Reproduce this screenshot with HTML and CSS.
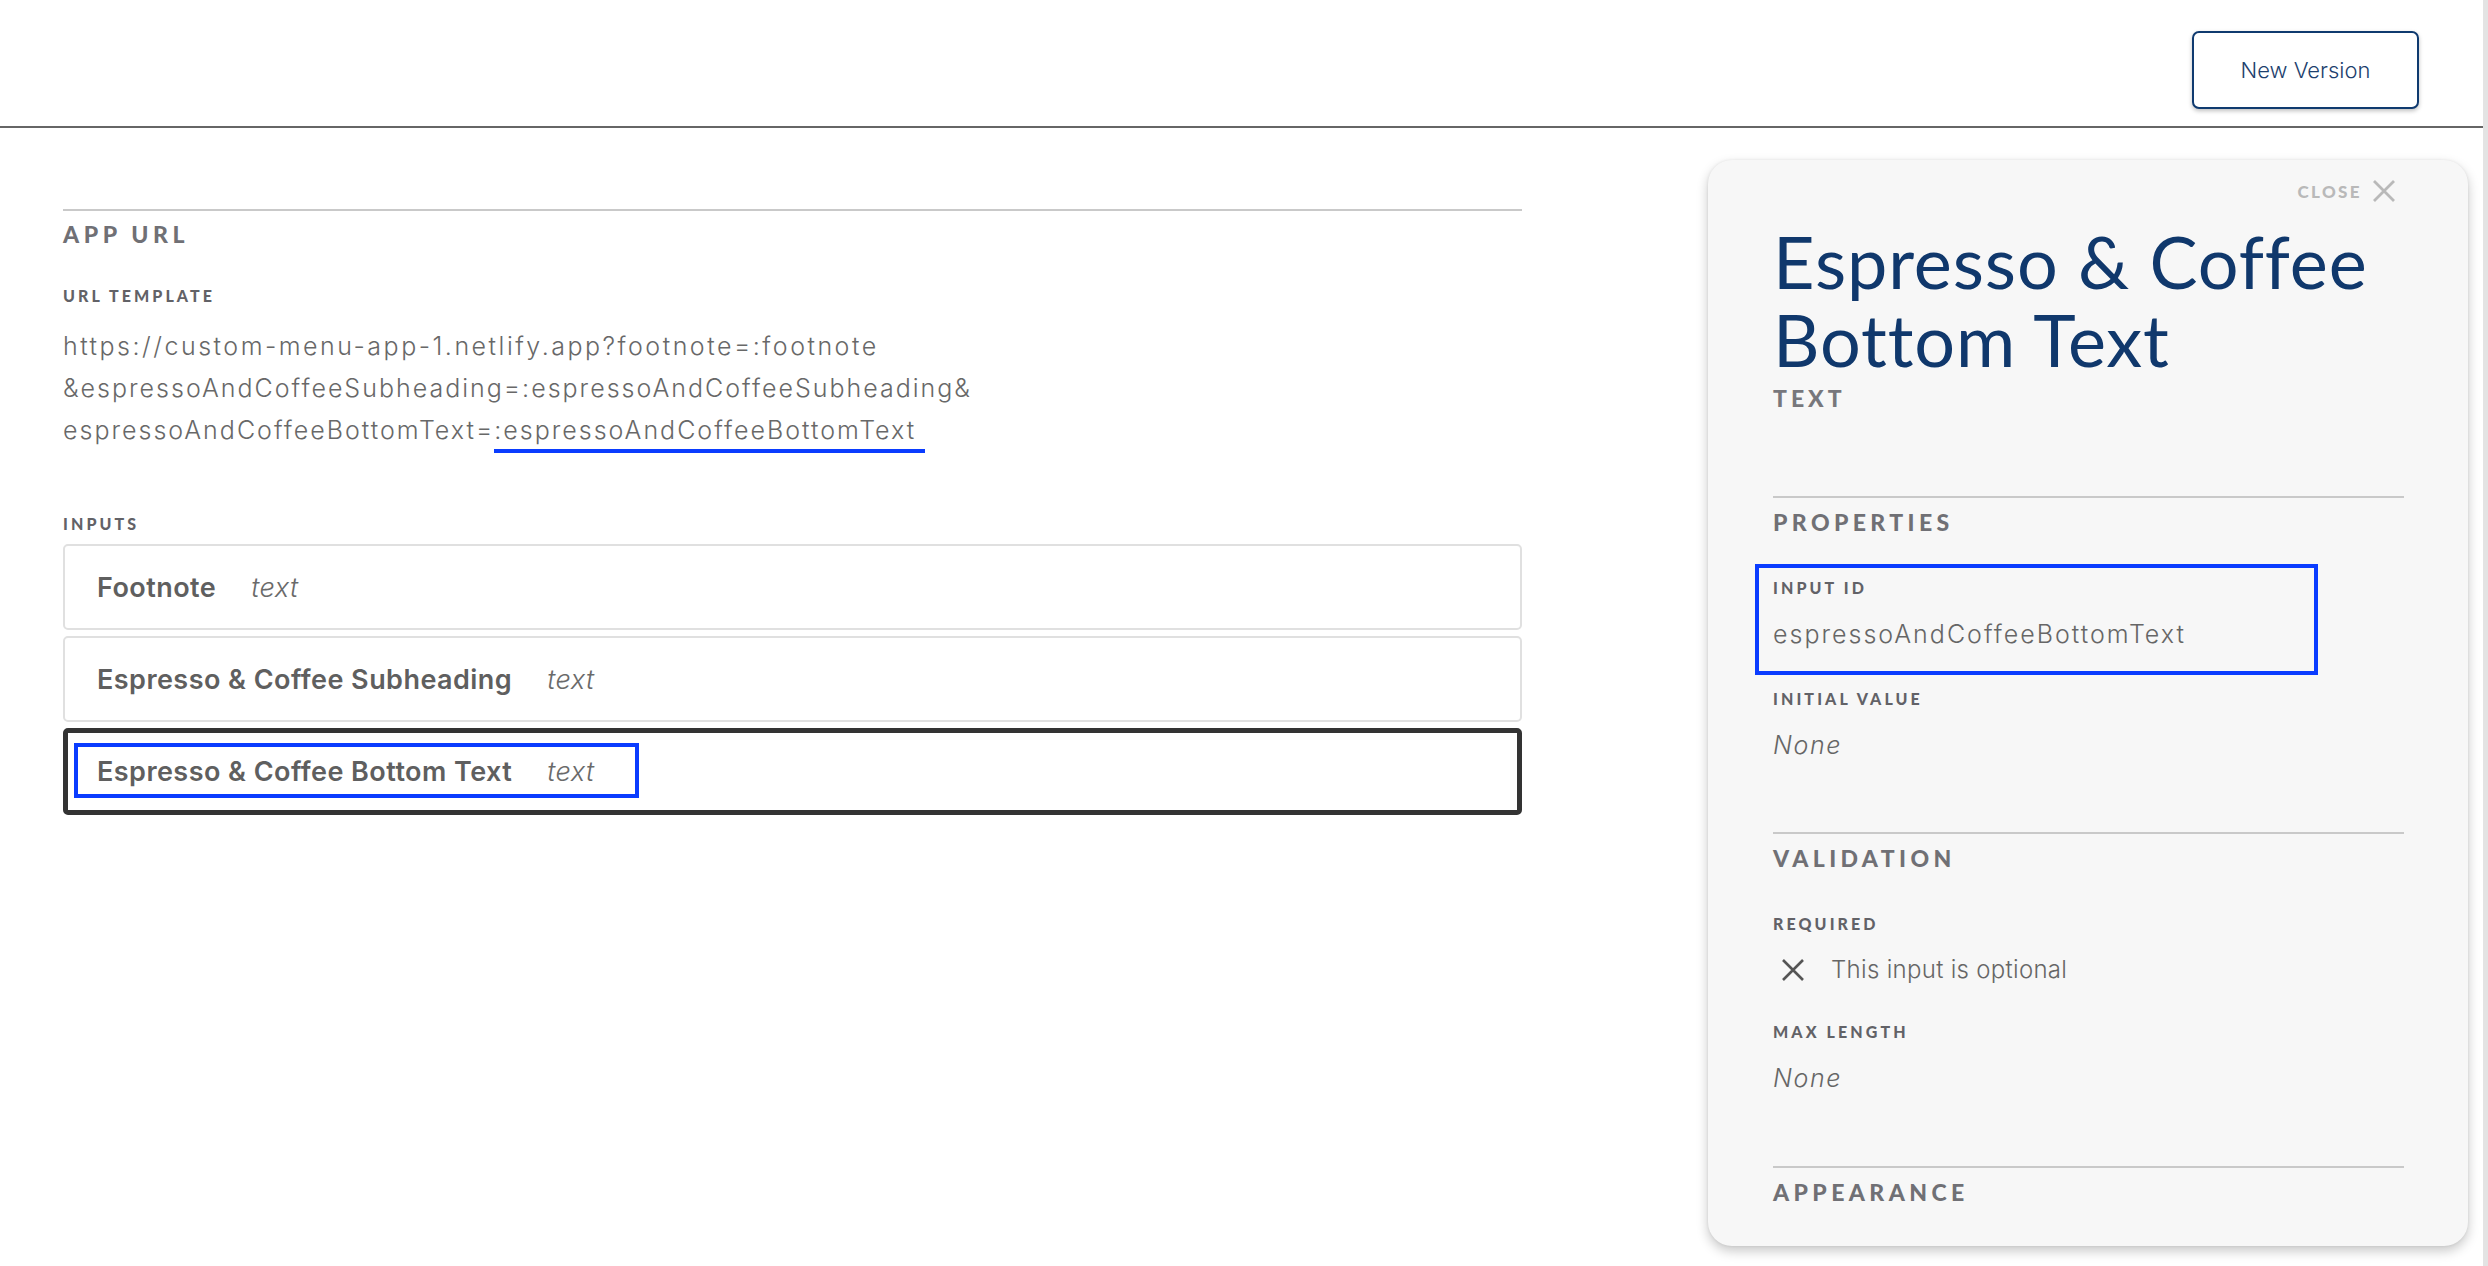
FILE: index.html
```html
<!DOCTYPE html>
<html lang="en">
<head>
<meta charset="utf-8">
<title>App inputs</title>
<link rel="stylesheet" href="styles.css">
</head>
<body>
<div class="page">
  <div class="main">
    <header class="topbar">
      <button class="btn-outline">New Version</button>
    </header>
    <div class="content">
      <section class="left">
        <div class="section">
          <h2 class="section-title">APP URL</h2>
          <div class="label">URL TEMPLATE</div>
          <div class="url">
            <span class="url-line url-line-first">https://custom-menu-app-1.netlify.app?footnote=:footnote</span>
            <span class="url-line">&amp;espressoAndCoffeeSubheading=:espressoAndCoffeeSubheading&amp;</span>
            <span class="url-line">espressoAndCoffeeBottomText=<span class="mark-under">:espressoAndCoffeeBottomText</span></span>
          </div>
          <div class="label label-inputs">INPUTS</div>
          <div class="cards">
            <div class="card"><span class="card-name">Footnote</span><span class="card-type">text</span></div>
            <div class="card"><span class="card-name">Espresso &amp; Coffee Subheading</span><span class="card-type">text</span></div>
            <div class="card card-active"><span class="card-name">Espresso &amp; Coffee Bottom Text</span><span class="card-type">text</span><span class="mark-box mark-card"></span></div>
          </div>
        </div>
      </section>
      <aside class="panel">
        <div class="close-row">
          <span class="close-text">CLOSE</span>
          <svg class="close-x" viewBox="0 0 24 22" width="24" height="22"><path d="M2 1 L22 21 M22 1 L2 21" stroke="currentColor" stroke-width="2.8" fill="none"/></svg>
        </div>
        <h1 class="panel-title">Espresso &amp; Coffee Bottom Text</h1>
        <div class="panel-type">TEXT</div>

        <div class="panel-section">
          <h3 class="panel-heading">PROPERTIES</h3>
          <div class="field field-marked">
            <div class="label">INPUT ID</div>
            <div class="value">espressoAndCoffeeBottomText</div>
            <span class="mark-box mark-field"></span>
          </div>
          <div class="field">
            <div class="label">INITIAL VALUE</div>
            <div class="value value-none">None</div>
          </div>
        </div>

        <div class="panel-section">
          <h3 class="panel-heading">VALIDATION</h3>
          <div class="field field-required">
            <div class="label">REQUIRED</div>
            <div class="value value-check">
              <svg class="x-icon" viewBox="0 0 24 22" width="24" height="22"><path d="M2 1 L22 21 M22 1 L2 21" stroke="currentColor" stroke-width="2.6" fill="none"/></svg>
              <span class="check-text">This input is optional</span>
            </div>
          </div>
          <div class="field">
            <div class="label">MAX LENGTH</div>
            <div class="value value-none">None</div>
          </div>
        </div>

        <div class="panel-section panel-section-last">
          <h3 class="panel-heading">APPEARANCE</h3>
        </div>
      </aside>
    </div>
  </div>
  <div class="scroll-strip"></div>
</div>
</body>
</html>
```

FILE: styles.css
```css
* { box-sizing: border-box; }

html, body {
  margin: 0;
  padding: 0;
  height: 100%;
  background: #ffffff;
  overflow: hidden;
}

body {
  font-family: "Inter", "Lato", "Liberation Sans", sans-serif;
  color: #6a6a6a;
}

.page {
  display: flex;
  height: 1266px;
}

.main {
  flex: 1;
  min-width: 0;
}

.scroll-strip {
  width: 5px;
  background: #e3e3e3;
}

/* header */
.topbar {
  height: 128px;
  border-bottom: 2px solid #666666;
  display: flex;
  justify-content: flex-end;
  align-items: flex-start;
  padding: 31px 64px 0 0;
}

.btn-outline {
  width: 227px;
  height: 78px;
  border: 2px solid #0f3a6f;
  border-radius: 7px;
  background: #ffffff;
  color: #1d3f6e;
  font-family: "Inter", "Lato", sans-serif;
  font-weight: 300;
  font-size: 22px;
  box-shadow: 0 2px 4px rgba(0, 0, 0, 0.25);
  padding: 0;
}

/* content */
.content {
  display: flex;
  align-items: flex-start;
}

.left {
  width: 1522px;
  padding: 81px 0 0 63px;
}

.section {
  border-top: 2px solid #c9c9c9;
}

.section-title {
  margin: 0;
  padding-top: 9px;
  font-family: "Lato", "Liberation Sans", sans-serif;
  font-weight: 900;
  font-size: 23px;
  line-height: 28px;
  letter-spacing: 4.6px;
  color: #707075;
}

.label {
  font-family: "Lato", "Liberation Sans", sans-serif;
  font-weight: 900;
  font-size: 16px;
  line-height: 20px;
  letter-spacing: 3.1px;
  color: #626267;
}

.section .label {
  margin-top: 38px;
}

.url {
  margin-top: 19px;
  font-weight: 300;
  font-size: 25px;
  line-height: 42px;
  letter-spacing: 2px;
  color: #686868;
}

.url-line {
  display: block;
  white-space: nowrap;
}

.url-line-first {
  letter-spacing: 2.5px;
}

.mark-under {
  position: relative;
}

.mark-under::after {
  content: "";
  position: absolute;
  left: 0;
  right: -9px;
  bottom: -8px;
  height: 4px;
  background: #0a3cff;
}

.section .label-inputs {
  margin-top: 63px;
}

.cards {
  margin-top: 10px;
  display: flex;
  flex-direction: column;
  gap: 6px;
}

.card {
  position: relative;
  height: 86px;
  border: 2px solid #e0e0e0;
  border-radius: 5px;
  padding: 0 32px;
  display: flex;
  align-items: center;
  gap: 35px;
}

.card-active {
  border: 5px solid #333333;
  height: 87px;
  padding: 0 29px;
}

.card-name {
  font-weight: 600;
  font-size: 27px;
  letter-spacing: 0.45px;
  color: #5f5f5f;
}

.card-type {
  font-style: italic;
  font-weight: 300;
  font-size: 27px;
  letter-spacing: 0.5px;
  color: #6a6a6a;
}

.mark-box {
  position: absolute;
  border: 4px solid #0a3cff;
  pointer-events: none;
}

.mark-card {
  left: 6px;
  top: 10px;
  width: 565px;
  height: 55px;
}

/* panel */
.panel {
  width: 760px;
  margin: 32px 15px 0 auto;
  background: #f7f7f7;
  border-radius: 24px;
  box-shadow: 0 5px 12px rgba(0, 0, 0, 0.22), 0 0 3px rgba(0, 0, 0, 0.08);
  padding: 20px 64px 0 65px;
  height: 1086px;
}

.close-row {
  display: flex;
  justify-content: flex-end;
  align-items: center;
  gap: 10px;
  padding-right: 8px;
  color: #b9b9b9;
}

.close-text {
  font-family: "Lato", "Liberation Sans", sans-serif;
  font-weight: 900;
  font-size: 17px;
  letter-spacing: 2.4px;
}

.close-x {
  display: block;
}

.panel-title {
  margin: 20px 0 0 0;
  font-family: "Lato", "Liberation Sans", sans-serif;
  font-weight: 400;
  font-size: 72px;
  line-height: 78px;
  color: #10386c;
  letter-spacing: 0.9px;
}

.panel-type {
  font-family: "Lato", "Liberation Sans", sans-serif;
  font-weight: 900;
  font-size: 23px;
  letter-spacing: 4px;
  color: #77777c;
  line-height: 28px;
  margin-top: 6px;
}

.panel-section {
  border-top: 2px solid #c9c9c9;
  margin-top: 84px;
}

.panel-section + .panel-section {
  margin-top: 71px;
}

.panel-section-last {
  margin-top: 72px !important;
}

.panel-heading {
  margin: 0;
  padding-top: 10px;
  font-family: "Lato", "Liberation Sans", sans-serif;
  font-weight: 900;
  font-size: 23px;
  line-height: 28px;
  letter-spacing: 4.4px;
  color: #707075;
}

.panel-heading + .field {
  margin-top: 42px;
}

.field {
  position: relative;
}

.field + .field {
  margin-top: 39px;
}

.field-required + .field {
  margin-top: 36px;
}

.value {
  margin-top: 20px;
  font-weight: 300;
  font-size: 25px;
  line-height: 32px;
  letter-spacing: 2px;
  color: #666666;
}

.value-none {
  font-style: italic;
  letter-spacing: 1.6px;
}

.mark-field {
  left: -18px;
  top: -14px;
  width: 563px;
  height: 111px;
}

.value-check {
  display: flex;
  align-items: center;
  gap: 26px;
  padding-left: 8px;
  letter-spacing: 0;
}

.check-text {
  font-size: 24px;
  letter-spacing: 0.3px;
}

.x-icon {
  display: block;
  color: #555555;
}
```
